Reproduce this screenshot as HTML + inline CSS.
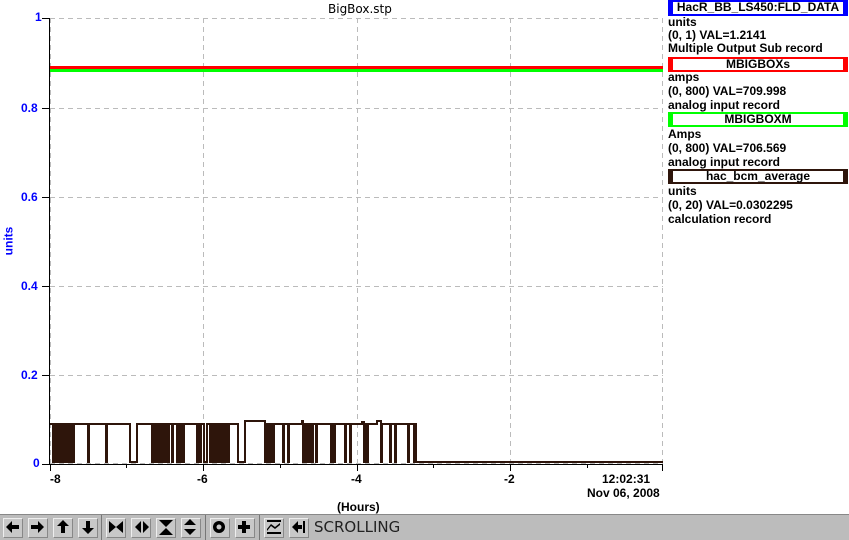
<!DOCTYPE html><html><head><style>
body{margin:0;width:849px;height:539px;background:#fff;overflow:hidden;font-family:"Liberation Sans",sans-serif;position:relative}
.t{position:absolute;font-size:12px;font-weight:bold;color:#000;white-space:nowrap}
.lg{position:absolute;left:668px;font-size:12px;font-weight:bold;line-height:13px;white-space:nowrap}
.box{position:absolute;left:668px;width:170px;height:11px;border:2px solid;border-width:2px 5px 2px 5px;font-size:12px;font-weight:bold;text-align:center;line-height:11px;background:#fff}
.tb{position:absolute;left:0;top:514px;width:849px;height:25px;background:#bcbcbc;border-top:1px solid #888}
.b{position:absolute;top:3px;width:18px;height:18px;background:#c8c8c8;border:1px solid #888;border-top-color:#eee;border-left-color:#eee}
.sep{position:absolute;top:0;width:1px;height:25px;background:#777}
</style></head><body>
<svg width="849" height="539" style="position:absolute;left:0;top:0">
<g stroke="#bbb" stroke-dasharray="5,4" stroke-width="1">
<path d="M50 18.5H663M50 108.5H663M50 197.5H663M50 286.5H663M50 375.5H663M50 463.5H663"/>
<path d="M50.5 18V464M203.5 18V464M357.5 18V464M510.5 18V464M662.5 18V464"/>
</g>
<path d="M49.5 18V464M42 18.5H50M42 108.5H50M42 197.5H50M42 286.5H50M42 375.5H50M42 464.5H50M49 464.5H663M50.5 464V471M203.5 464V471M357.5 464V471M510.5 464V471M662.5 464V471M126.5 464V468M280.5 464V468M433.5 464V468M587.5 464V468" stroke="#000" fill="none"/>
<rect x="50" y="66" width="613" height="3" fill="#f00"/>
<rect x="50" y="69" width="613" height="3" fill="#0f0"/>
<path fill="none" stroke="#2e150b" stroke-width="2" d="M50 424H53V462H54V424H56V462H58V424H60V462H61V424H63V462H64V424H65V462H66V424H67V462H68V424H69V462H70V424H71V462H72V424H73V462H74V424H88V462H89V424H106V462H107V424H130V462H137V424H152V462H153V424H154V462H155V424H157V462H158V424H159V462H160V424H162V462H163V424H165V462H166V424H168V462H169V424H172V462H173V424H177V462H178V424H180V462H181V424H183V462H184V424H197V462H198V424H200V462H201V424H204V462H207V424H210V462H211V424H213V462H214V424H216V462H217V424H219V462H220V424H222V462H223V424H225V462H226V424H228V462H229V424H238V462H245V421H265V462H266V424H267V462H268V424H270V462H271V424H273V462H274V424H283V462H284V424H288V462H289V424H302V421H303V462H304V424H306V462H307V424H309V462H310V424H312V462H313V424H316V462H317V424H331V462H332V424H334V462H335V424H345V462H346V424H350V462H351V424H362V422H364V462H365V424H367V462H368V424H377V421H381V462H382V424H390V462H391V424H395V462H396V424H408V462H409V424H414V462H415V424H416V462H663"/>
</svg>
<div class="t" style="left:328px;top:2px;font-weight:normal;font-family:'DejaVu Sans',sans-serif;font-size:12px">BigBox.stp</div>
<div class="t" style="left:35px;top:10px;color:#00f">1</div>
<div class="t" style="left:21px;top:101px;color:#00f">0.8</div>
<div class="t" style="left:21px;top:190px;color:#00f">0.6</div>
<div class="t" style="left:21px;top:279px;color:#00f">0.4</div>
<div class="t" style="left:21px;top:368px;color:#00f">0.2</div>
<div class="t" style="left:33px;top:456px;color:#00f">0</div>
<div class="t" style="left:-6px;top:234px;color:#00f;transform:rotate(-90deg)">units</div>
<div class="t" style="left:50px;top:472px">-8</div>
<div class="t" style="left:197px;top:472px">-6</div>
<div class="t" style="left:351px;top:472px">-4</div>
<div class="t" style="left:504px;top:472px">-2</div>
<div class="t" style="left:602px;top:472px">12:02:31</div>
<div class="t" style="left:587px;top:486px">Nov 06, 2008</div>
<div class="t" style="left:337px;top:500px">(Hours)</div>
<div class="box" style="top:0;left:668px;width:170px;height:12px;border-color:#00f">HacR_BB_LS450:FLD_DATA</div>
<div class="lg" style="top:16px">units<br>(0, 1) VAL=1.2141<br>Multiple Output Sub record</div>
<div class="box" style="top:57px;border-color:#f00">MBIGBOXs</div>
<div class="lg" style="top:70px;line-height:14px">amps<br>(0, 800) VAL=709.998<br>analog input record</div>
<div class="box" style="top:112px;border-color:#0f0">MBIGBOXM</div>
<div class="lg" style="top:127px;line-height:14px">Amps<br>(0, 800) VAL=706.569<br>analog input record</div>
<div class="box" style="top:169px;border-color:#2e150b">hac_bcm_average</div>
<div class="lg" style="top:184px;line-height:14px">units<br>(0, 20) VAL=0.0302295<br>calculation record</div>
<div class="tb">
<div class="b" style="left:3px"></div><div class="b" style="left:28px"></div><div class="b" style="left:53px"></div><div class="b" style="left:78px"></div>
<div class="sep" style="left:101px"></div>
<div class="b" style="left:106px"></div><div class="b" style="left:131px"></div><div class="b" style="left:156px"></div><div class="b" style="left:181px"></div>
<div class="sep" style="left:205px"></div>
<div class="b" style="left:210px"></div><div class="b" style="left:235px"></div>
<div class="sep" style="left:259px"></div>
<div class="b" style="left:264px"></div><div class="b" style="left:289px"></div>
<svg width="320" height="25" style="position:absolute;left:0;top:0" fill="#000">
<path d="M6 12l6-6v4h7v4h-7v4z"/><path d="M44 12l-6-6v4h-7v4h7v4z"/>
<path d="M63 5l-6 6h4v7h4v-7h4z"/><path d="M88 19l-6-6h4v-7h4v7h4z"/>
<path d="M109 6l7 6-7 6zM123 6l-7 6 7 6z"/><path d="M141 6l-6 6 6 6zM143 6l6 6-6 6z"/>
<path d="M159 5h14l-7 7zM159 20h14l-7-7z"/><path d="M190 4l-6 6h12zM190 20l-6-6h12z"/>
<circle cx="219" cy="12" r="6"/><circle cx="219" cy="12" r="2.5" fill="#c8c8c8"/>
<path d="M242 6h4v4h4v4h-4v4h-4v-4h-4v-4h4z"/>
<path d="M267 5h14v2h-14zM267 17h14v2h-14zM267 14l4-5 4 3 5-4v2l-5 4-4-3-4 5z"/>
<path d="M303 6h2v12h-2zM292 12l6-6v4h4v4h-4v4z"/>
</svg>
<div style="position:absolute;left:314px;top:3px;font-size:15px;color:#222;font-family:'DejaVu Sans',sans-serif">SCROLLING</div>
</div>
</body></html>
